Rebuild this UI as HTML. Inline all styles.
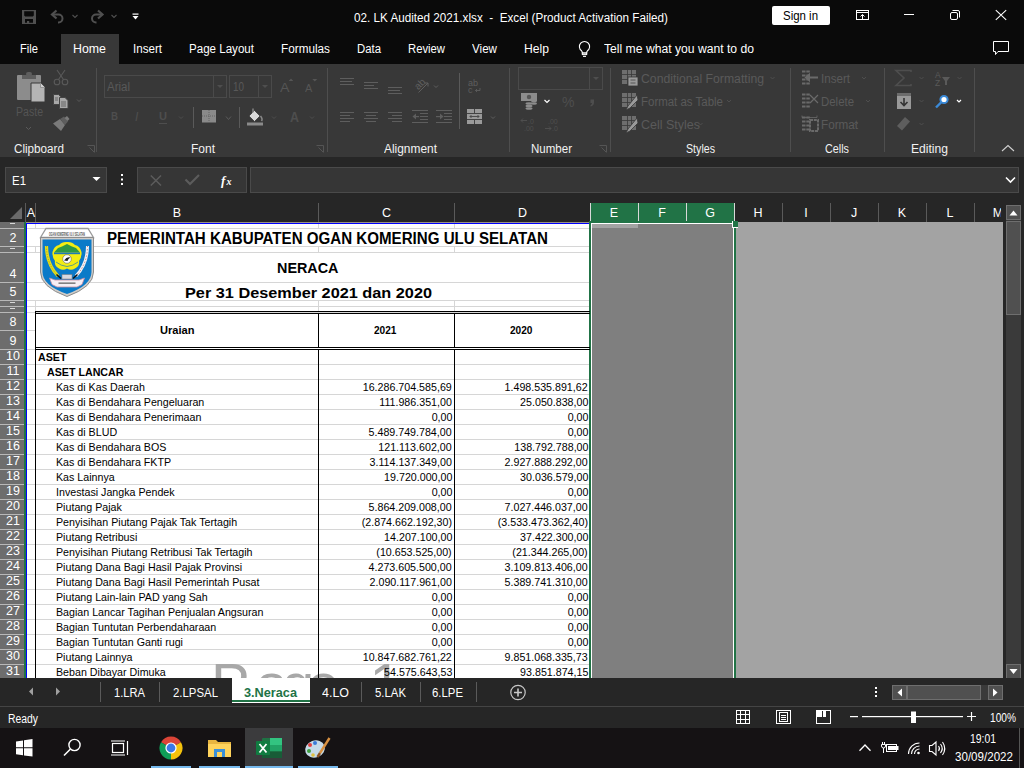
<!DOCTYPE html><html><head><meta charset="utf-8"><style>
html,body{margin:0;padding:0}
body{width:1024px;height:768px;overflow:hidden;position:relative;background:#0a0a0a;font-family:'Liberation Sans', sans-serif}
div{box-sizing:border-box}
</style></head><body>
<div style="position:absolute;left:0px;top:0px;width:1024px;height:64px;background:#0a0a0a"></div>
<div style="position:absolute;left:354px;top:12px;font-size:12.5px;line-height:12.5px;color:#fff;font-weight:normal;white-space:pre;transform:scaleX(0.9357);transform-origin:0 0">02. LK Audited 2021.xlsx  -  Excel (Product Activation Failed)</div>
<div style="position:absolute;left:772px;top:6px;width:58px;height:19px;background:#fff;border-radius:2px"></div>
<div style="position:absolute;left:783px;top:9px;font-size:13px;line-height:13px;color:#000;font-weight:normal;white-space:pre;transform:scaleX(0.8805);transform-origin:0 0">Sign in</div>
<div style="position:absolute;left:61px;top:34px;width:58px;height:30px;background:#383838"></div>
<div style="position:absolute;left:20px;top:43px;font-size:12.5px;line-height:12.5px;color:#fff;font-weight:normal;white-space:pre;transform:scaleX(0.8930);transform-origin:0 0">File</div>
<div style="position:absolute;left:73px;top:43px;font-size:12.5px;line-height:12.5px;color:#fff;font-weight:normal;white-space:pre;transform:scaleX(0.9897);transform-origin:0 0">Home</div>
<div style="position:absolute;left:133px;top:43px;font-size:12.5px;line-height:12.5px;color:#fff;font-weight:normal;white-space:pre;transform:scaleX(0.9275);transform-origin:0 0">Insert</div>
<div style="position:absolute;left:189px;top:43px;font-size:12.5px;line-height:12.5px;color:#fff;font-weight:normal;white-space:pre;transform:scaleX(0.9259);transform-origin:0 0">Page Layout</div>
<div style="position:absolute;left:281px;top:43px;font-size:12.5px;line-height:12.5px;color:#fff;font-weight:normal;white-space:pre;transform:scaleX(0.9406);transform-origin:0 0">Formulas</div>
<div style="position:absolute;left:357px;top:43px;font-size:12.5px;line-height:12.5px;color:#fff;font-weight:normal;white-space:pre;transform:scaleX(0.9089);transform-origin:0 0">Data</div>
<div style="position:absolute;left:408px;top:43px;font-size:12.5px;line-height:12.5px;color:#fff;font-weight:normal;white-space:pre;transform:scaleX(0.9024);transform-origin:0 0">Review</div>
<div style="position:absolute;left:472px;top:43px;font-size:12.5px;line-height:12.5px;color:#fff;font-weight:normal;white-space:pre;transform:scaleX(0.9302);transform-origin:0 0">View</div>
<div style="position:absolute;left:524px;top:43px;font-size:12.5px;line-height:12.5px;color:#fff;font-weight:normal;white-space:pre;transform:scaleX(0.9721);transform-origin:0 0">Help</div>
<div style="position:absolute;left:604px;top:43px;font-size:12.5px;line-height:12.5px;color:#fff;font-weight:normal;white-space:pre;transform:scaleX(0.9724);transform-origin:0 0">Tell me what you want to do</div>
<div style="position:absolute;left:0px;top:64px;width:1024px;height:93px;background:#383838"></div>
<div style="position:absolute;left:14px;top:143px;font-size:12.5px;line-height:12.5px;color:#f2f2f2;font-weight:normal;white-space:pre;transform:scaleX(0.9343);transform-origin:0 0">Clipboard</div>
<div style="position:absolute;left:191px;top:143px;font-size:12.5px;line-height:12.5px;color:#f2f2f2;font-weight:normal;white-space:pre;transform:scaleX(0.9594);transform-origin:0 0">Font</div>
<div style="position:absolute;left:384px;top:143px;font-size:12.5px;line-height:12.5px;color:#f2f2f2;font-weight:normal;white-space:pre;transform:scaleX(0.9533);transform-origin:0 0">Alignment</div>
<div style="position:absolute;left:531px;top:143px;font-size:12.5px;line-height:12.5px;color:#f2f2f2;font-weight:normal;white-space:pre;transform:scaleX(0.9220);transform-origin:0 0">Number</div>
<div style="position:absolute;left:686px;top:143px;font-size:12.5px;line-height:12.5px;color:#f2f2f2;font-weight:normal;white-space:pre;transform:scaleX(0.8518);transform-origin:0 0">Styles</div>
<div style="position:absolute;left:825px;top:143px;font-size:12.5px;line-height:12.5px;color:#f2f2f2;font-weight:normal;white-space:pre;transform:scaleX(0.8634);transform-origin:0 0">Cells</div>
<div style="position:absolute;left:911px;top:143px;font-size:12.5px;line-height:12.5px;color:#f2f2f2;font-weight:normal;white-space:pre;transform:scaleX(0.9677);transform-origin:0 0">Editing</div>
<div style="position:absolute;left:96px;top:68px;width:1px;height:84px;background:#4e4e4e"></div>
<div style="position:absolute;left:327px;top:68px;width:1px;height:84px;background:#4e4e4e"></div>
<div style="position:absolute;left:509px;top:68px;width:1px;height:84px;background:#4e4e4e"></div>
<div style="position:absolute;left:610px;top:68px;width:1px;height:84px;background:#4e4e4e"></div>
<div style="position:absolute;left:790px;top:68px;width:1px;height:84px;background:#4e4e4e"></div>
<div style="position:absolute;left:884px;top:68px;width:1px;height:84px;background:#4e4e4e"></div>
<div style="position:absolute;left:974px;top:68px;width:1px;height:84px;background:#4e4e4e"></div>
<div style="position:absolute;left:16px;top:106px;font-size:12.5px;line-height:12.5px;color:#545454;font-weight:normal;white-space:pre;transform:scaleX(0.8446);transform-origin:0 0">Paste</div>
<div style="position:absolute;left:107px;top:81px;font-size:12.5px;line-height:12.5px;color:#595959;font-weight:normal;white-space:pre;transform:scaleX(0.9194);transform-origin:0 0">Arial</div>
<div style="position:absolute;left:233px;top:81px;font-size:12.5px;line-height:12.5px;color:#595959;font-weight:normal;white-space:pre;transform:scaleX(0.7910);transform-origin:0 0">10</div>
<div style="position:absolute;left:280px;top:81px;font-size:13px;line-height:13px;color:#555;font-weight:normal;white-space:pre;transform:scaleX(1.0955);transform-origin:0 0">A</div>
<div style="position:absolute;left:305px;top:84px;font-size:10px;line-height:10px;color:#555;font-weight:normal;white-space:pre;transform:scaleX(1.0941);transform-origin:0 0">A</div>
<div style="position:absolute;left:111px;top:111px;font-size:11px;line-height:11px;color:#4e4e4e;font-weight:bold;white-space:pre;transform:scaleX(0.8802);transform-origin:0 0">B</div>
<div style="position:absolute;left:135px;top:111px;font-size:12px;line-height:12px;color:#4e4e4e;font-style:italic">I</div>
<div style="position:absolute;left:159px;top:111px;font-size:11px;line-height:11px;color:#4e4e4e;font-weight:bold;white-space:pre;transform:scaleX(1.0059);transform-origin:0 0">U</div>
<div style="position:absolute;left:159px;top:123px;width:8px;height:1px;background:#4e4e4e"></div>
<div style="position:absolute;left:290px;top:110px;font-size:14px;line-height:14px;color:#4e4e4e;font-weight:bold;white-space:pre;transform:scaleX(0.8889);transform-origin:0 0">A</div>
<div style="position:absolute;left:641px;top:73px;font-size:12.5px;line-height:12.5px;color:#5a5a5a;font-weight:normal;white-space:pre;transform:scaleX(0.9780);transform-origin:0 0">Conditional Formatting</div>
<div style="position:absolute;left:641px;top:96px;font-size:12.5px;line-height:12.5px;color:#5a5a5a;font-weight:normal;white-space:pre;transform:scaleX(0.9172);transform-origin:0 0">Format as Table</div>
<div style="position:absolute;left:641px;top:119px;font-size:12.5px;line-height:12.5px;color:#5a5a5a;font-weight:normal;white-space:pre;transform:scaleX(0.9992);transform-origin:0 0">Cell Styles</div>
<div style="position:absolute;left:821px;top:73px;font-size:12.5px;line-height:12.5px;color:#5a5a5a;font-weight:normal;white-space:pre;transform:scaleX(0.9275);transform-origin:0 0">Insert</div>
<div style="position:absolute;left:821px;top:96px;font-size:12.5px;line-height:12.5px;color:#5a5a5a;font-weight:normal;white-space:pre;transform:scaleX(0.9131);transform-origin:0 0">Delete</div>
<div style="position:absolute;left:821px;top:119px;font-size:12.5px;line-height:12.5px;color:#5a5a5a;font-weight:normal;white-space:pre;transform:scaleX(0.9345);transform-origin:0 0">Format</div>
<div style="position:absolute;left:0px;top:157px;width:1024px;height:46px;background:#262626"></div>
<div style="position:absolute;left:5px;top:167px;width:102px;height:26px;background:#363636;border:1px solid #4a4a4a"></div>
<div style="position:absolute;left:12px;top:175px;font-size:12.5px;line-height:12.5px;color:#fff;font-weight:normal;white-space:pre;transform:scaleX(0.9152);transform-origin:0 0">E1</div>
<div style="position:absolute;left:137px;top:167px;width:110px;height:26px;background:#363636;border:1px solid #4a4a4a"></div>
<div style="position:absolute;left:250px;top:167px;width:769px;height:26px;background:#363636;border:1px solid #4a4a4a"></div>
<div style="position:absolute;left:0px;top:203px;width:1024px;height:475px;background:#262626"></div>
<div style="position:absolute;left:590px;top:203px;width:145px;height:19px;background:#217346"></div>
<div style="position:absolute;left:25px;top:203px;width:1px;height:19px;background:#5a5a5a"></div>
<div style="position:absolute;left:35px;top:203px;width:1px;height:19px;background:#5a5a5a"></div>
<div style="position:absolute;left:318px;top:203px;width:1px;height:19px;background:#5a5a5a"></div>
<div style="position:absolute;left:454px;top:203px;width:1px;height:19px;background:#5a5a5a"></div>
<div style="position:absolute;left:782px;top:203px;width:1px;height:19px;background:#5a5a5a"></div>
<div style="position:absolute;left:830px;top:203px;width:1px;height:19px;background:#5a5a5a"></div>
<div style="position:absolute;left:878px;top:203px;width:1px;height:19px;background:#5a5a5a"></div>
<div style="position:absolute;left:926px;top:203px;width:1px;height:19px;background:#5a5a5a"></div>
<div style="position:absolute;left:974px;top:203px;width:1px;height:19px;background:#5a5a5a"></div>
<div style="position:absolute;left:590px;top:203px;width:1px;height:19px;background:#d8d8d8"></div>
<div style="position:absolute;left:638px;top:203px;width:1px;height:19px;background:#d8d8d8"></div>
<div style="position:absolute;left:686px;top:203px;width:1px;height:19px;background:#d8d8d8"></div>
<div style="position:absolute;left:734px;top:203px;width:1px;height:19px;background:#d8d8d8"></div>
<div style="position:absolute;left:0;top:203px;width:1001px;height:19px;overflow:hidden">
<div style="position:absolute;left:26px;top:4px;width:10px;text-align:center;font-size:12.5px;line-height:13px;color:#fff">A</div>
<div style="position:absolute;left:36px;top:4px;width:282px;text-align:center;font-size:12.5px;line-height:13px;color:#fff">B</div>
<div style="position:absolute;left:319px;top:4px;width:135px;text-align:center;font-size:12.5px;line-height:13px;color:#fff">C</div>
<div style="position:absolute;left:455px;top:4px;width:135px;text-align:center;font-size:12.5px;line-height:13px;color:#fff">D</div>
<div style="position:absolute;left:590px;top:4px;width:48px;text-align:center;font-size:12.5px;line-height:13px;color:#fff">E</div>
<div style="position:absolute;left:638px;top:4px;width:48px;text-align:center;font-size:12.5px;line-height:13px;color:#fff">F</div>
<div style="position:absolute;left:686px;top:4px;width:48px;text-align:center;font-size:12.5px;line-height:13px;color:#fff">G</div>
<div style="position:absolute;left:734px;top:4px;width:48px;text-align:center;font-size:12.5px;line-height:13px;color:#fff">H</div>
<div style="position:absolute;left:782px;top:4px;width:48px;text-align:center;font-size:12.5px;line-height:13px;color:#fff">I</div>
<div style="position:absolute;left:830px;top:4px;width:48px;text-align:center;font-size:12.5px;line-height:13px;color:#fff">J</div>
<div style="position:absolute;left:878px;top:4px;width:48px;text-align:center;font-size:12.5px;line-height:13px;color:#fff">K</div>
<div style="position:absolute;left:926px;top:4px;width:48px;text-align:center;font-size:12.5px;line-height:13px;color:#fff">L</div>
<div style="position:absolute;left:974px;top:4px;width:48px;text-align:center;font-size:12.5px;line-height:13px;color:#fff">M</div>
</div>
<div style="position:absolute;left:0px;top:222px;width:590px;height:1px;background:#9a9486"></div>
<div style="position:absolute;left:0px;top:222px;width:24px;height:456px;background:#6d6d6d"></div>
<div style="position:absolute;left:24px;top:222px;width:2px;height:456px;background:#217346"></div>
<div style="position:absolute;left:26px;top:223px;width:564px;height:455px;background:#fff"></div>
<div style="position:absolute;left:26px;top:223px;width:1px;height:455px;background:#0000ff"></div>
<div style="position:absolute;left:26px;top:223px;width:564px;height:1px;background:#0000ff"></div>
<div style="position:absolute;left:0px;top:228px;width:24px;height:1px;background:#b8b8b8"></div>
<div style="position:absolute;left:10px;top:223px;width:5px;height:1px;background:#d8d8d8"></div>
<div style="position:absolute;left:0px;top:246px;width:24px;height:1px;background:#b8b8b8"></div>
<div style="position:absolute;left:1px;top:232px;width:24px;text-align:center;font-size:12.5px;line-height:13px;color:#fff">2</div>
<div style="position:absolute;left:0px;top:252px;width:24px;height:1px;background:#b8b8b8"></div>
<div style="position:absolute;left:10px;top:248px;width:5px;height:1px;background:#d8d8d8"></div>
<div style="position:absolute;left:0px;top:282px;width:24px;height:1px;background:#b8b8b8"></div>
<div style="position:absolute;left:1px;top:268px;width:24px;text-align:center;font-size:12.5px;line-height:13px;color:#fff">4</div>
<div style="position:absolute;left:0px;top:300px;width:24px;height:1px;background:#b8b8b8"></div>
<div style="position:absolute;left:1px;top:286px;width:24px;text-align:center;font-size:12.5px;line-height:13px;color:#fff">5</div>
<div style="position:absolute;left:0px;top:306px;width:24px;height:1px;background:#b8b8b8"></div>
<div style="position:absolute;left:10px;top:302px;width:5px;height:1px;background:#d8d8d8"></div>
<div style="position:absolute;left:0px;top:312px;width:24px;height:1px;background:#b8b8b8"></div>
<div style="position:absolute;left:10px;top:308px;width:5px;height:1px;background:#d8d8d8"></div>
<div style="position:absolute;left:0px;top:330px;width:24px;height:1px;background:#b8b8b8"></div>
<div style="position:absolute;left:1px;top:316px;width:24px;text-align:center;font-size:12.5px;line-height:13px;color:#fff">8</div>
<div style="position:absolute;left:0px;top:349px;width:24px;height:1px;background:#b8b8b8"></div>
<div style="position:absolute;left:1px;top:335px;width:24px;text-align:center;font-size:12.5px;line-height:13px;color:#fff">9</div>
<div style="position:absolute;left:0px;top:364px;width:24px;height:1px;background:#b8b8b8"></div>
<div style="position:absolute;left:1px;top:350px;width:24px;text-align:center;font-size:12.5px;line-height:13px;color:#fff">10</div>
<div style="position:absolute;left:0px;top:379px;width:24px;height:1px;background:#b8b8b8"></div>
<div style="position:absolute;left:1px;top:365px;width:24px;text-align:center;font-size:12.5px;line-height:13px;color:#fff">11</div>
<div style="position:absolute;left:0px;top:394px;width:24px;height:1px;background:#b8b8b8"></div>
<div style="position:absolute;left:1px;top:380px;width:24px;text-align:center;font-size:12.5px;line-height:13px;color:#fff">12</div>
<div style="position:absolute;left:0px;top:409px;width:24px;height:1px;background:#b8b8b8"></div>
<div style="position:absolute;left:1px;top:395px;width:24px;text-align:center;font-size:12.5px;line-height:13px;color:#fff">13</div>
<div style="position:absolute;left:0px;top:424px;width:24px;height:1px;background:#b8b8b8"></div>
<div style="position:absolute;left:1px;top:410px;width:24px;text-align:center;font-size:12.5px;line-height:13px;color:#fff">14</div>
<div style="position:absolute;left:0px;top:439px;width:24px;height:1px;background:#b8b8b8"></div>
<div style="position:absolute;left:1px;top:425px;width:24px;text-align:center;font-size:12.5px;line-height:13px;color:#fff">15</div>
<div style="position:absolute;left:0px;top:454px;width:24px;height:1px;background:#b8b8b8"></div>
<div style="position:absolute;left:1px;top:440px;width:24px;text-align:center;font-size:12.5px;line-height:13px;color:#fff">16</div>
<div style="position:absolute;left:0px;top:469px;width:24px;height:1px;background:#b8b8b8"></div>
<div style="position:absolute;left:1px;top:455px;width:24px;text-align:center;font-size:12.5px;line-height:13px;color:#fff">17</div>
<div style="position:absolute;left:0px;top:484px;width:24px;height:1px;background:#b8b8b8"></div>
<div style="position:absolute;left:1px;top:470px;width:24px;text-align:center;font-size:12.5px;line-height:13px;color:#fff">18</div>
<div style="position:absolute;left:0px;top:499px;width:24px;height:1px;background:#b8b8b8"></div>
<div style="position:absolute;left:1px;top:485px;width:24px;text-align:center;font-size:12.5px;line-height:13px;color:#fff">19</div>
<div style="position:absolute;left:0px;top:514px;width:24px;height:1px;background:#b8b8b8"></div>
<div style="position:absolute;left:1px;top:500px;width:24px;text-align:center;font-size:12.5px;line-height:13px;color:#fff">20</div>
<div style="position:absolute;left:0px;top:529px;width:24px;height:1px;background:#b8b8b8"></div>
<div style="position:absolute;left:1px;top:515px;width:24px;text-align:center;font-size:12.5px;line-height:13px;color:#fff">21</div>
<div style="position:absolute;left:0px;top:544px;width:24px;height:1px;background:#b8b8b8"></div>
<div style="position:absolute;left:1px;top:530px;width:24px;text-align:center;font-size:12.5px;line-height:13px;color:#fff">22</div>
<div style="position:absolute;left:0px;top:559px;width:24px;height:1px;background:#b8b8b8"></div>
<div style="position:absolute;left:1px;top:545px;width:24px;text-align:center;font-size:12.5px;line-height:13px;color:#fff">23</div>
<div style="position:absolute;left:0px;top:574px;width:24px;height:1px;background:#b8b8b8"></div>
<div style="position:absolute;left:1px;top:560px;width:24px;text-align:center;font-size:12.5px;line-height:13px;color:#fff">24</div>
<div style="position:absolute;left:0px;top:589px;width:24px;height:1px;background:#b8b8b8"></div>
<div style="position:absolute;left:1px;top:575px;width:24px;text-align:center;font-size:12.5px;line-height:13px;color:#fff">25</div>
<div style="position:absolute;left:0px;top:604px;width:24px;height:1px;background:#b8b8b8"></div>
<div style="position:absolute;left:1px;top:590px;width:24px;text-align:center;font-size:12.5px;line-height:13px;color:#fff">26</div>
<div style="position:absolute;left:0px;top:619px;width:24px;height:1px;background:#b8b8b8"></div>
<div style="position:absolute;left:1px;top:605px;width:24px;text-align:center;font-size:12.5px;line-height:13px;color:#fff">27</div>
<div style="position:absolute;left:0px;top:634px;width:24px;height:1px;background:#b8b8b8"></div>
<div style="position:absolute;left:1px;top:620px;width:24px;text-align:center;font-size:12.5px;line-height:13px;color:#fff">28</div>
<div style="position:absolute;left:0px;top:649px;width:24px;height:1px;background:#b8b8b8"></div>
<div style="position:absolute;left:1px;top:635px;width:24px;text-align:center;font-size:12.5px;line-height:13px;color:#fff">29</div>
<div style="position:absolute;left:0px;top:664px;width:24px;height:1px;background:#b8b8b8"></div>
<div style="position:absolute;left:1px;top:650px;width:24px;text-align:center;font-size:12.5px;line-height:13px;color:#fff">30</div>
<div style="position:absolute;left:0px;top:679px;width:24px;height:1px;background:#b8b8b8"></div>
<div style="position:absolute;left:1px;top:665px;width:24px;text-align:center;font-size:12.5px;line-height:13px;color:#fff">31</div>
<div style="position:absolute;left:27px;top:228px;width:563px;height:1px;background:#d6d6d6"></div>
<div style="position:absolute;left:27px;top:246px;width:563px;height:1px;background:#d6d6d6"></div>
<div style="position:absolute;left:27px;top:252px;width:563px;height:1px;background:#d6d6d6"></div>
<div style="position:absolute;left:27px;top:282px;width:563px;height:1px;background:#d6d6d6"></div>
<div style="position:absolute;left:27px;top:300px;width:563px;height:1px;background:#d6d6d6"></div>
<div style="position:absolute;left:27px;top:306px;width:563px;height:1px;background:#d6d6d6"></div>
<div style="position:absolute;left:27px;top:312px;width:563px;height:1px;background:#d6d6d6"></div>
<div style="position:absolute;left:27px;top:330px;width:563px;height:1px;background:#d6d6d6"></div>
<div style="position:absolute;left:27px;top:349px;width:563px;height:1px;background:#d6d6d6"></div>
<div style="position:absolute;left:27px;top:364px;width:563px;height:1px;background:#d6d6d6"></div>
<div style="position:absolute;left:27px;top:379px;width:563px;height:1px;background:#d6d6d6"></div>
<div style="position:absolute;left:27px;top:394px;width:563px;height:1px;background:#d6d6d6"></div>
<div style="position:absolute;left:27px;top:409px;width:563px;height:1px;background:#d6d6d6"></div>
<div style="position:absolute;left:27px;top:424px;width:563px;height:1px;background:#d6d6d6"></div>
<div style="position:absolute;left:27px;top:439px;width:563px;height:1px;background:#d6d6d6"></div>
<div style="position:absolute;left:27px;top:454px;width:563px;height:1px;background:#d6d6d6"></div>
<div style="position:absolute;left:27px;top:469px;width:563px;height:1px;background:#d6d6d6"></div>
<div style="position:absolute;left:27px;top:484px;width:563px;height:1px;background:#d6d6d6"></div>
<div style="position:absolute;left:27px;top:499px;width:563px;height:1px;background:#d6d6d6"></div>
<div style="position:absolute;left:27px;top:514px;width:563px;height:1px;background:#d6d6d6"></div>
<div style="position:absolute;left:27px;top:529px;width:563px;height:1px;background:#d6d6d6"></div>
<div style="position:absolute;left:27px;top:544px;width:563px;height:1px;background:#d6d6d6"></div>
<div style="position:absolute;left:27px;top:559px;width:563px;height:1px;background:#d6d6d6"></div>
<div style="position:absolute;left:27px;top:574px;width:563px;height:1px;background:#d6d6d6"></div>
<div style="position:absolute;left:27px;top:589px;width:563px;height:1px;background:#d6d6d6"></div>
<div style="position:absolute;left:27px;top:604px;width:563px;height:1px;background:#d6d6d6"></div>
<div style="position:absolute;left:27px;top:619px;width:563px;height:1px;background:#d6d6d6"></div>
<div style="position:absolute;left:27px;top:634px;width:563px;height:1px;background:#d6d6d6"></div>
<div style="position:absolute;left:27px;top:649px;width:563px;height:1px;background:#d6d6d6"></div>
<div style="position:absolute;left:27px;top:664px;width:563px;height:1px;background:#d6d6d6"></div>
<div style="position:absolute;left:27px;top:679px;width:563px;height:1px;background:#d6d6d6"></div>
<div style="position:absolute;left:35px;top:224px;width:1px;height:454px;background:#d6d6d6"></div>
<div style="position:absolute;left:318px;top:224px;width:1px;height:88px;background:#d6d6d6"></div>
<div style="position:absolute;left:454px;top:224px;width:1px;height:88px;background:#d6d6d6"></div>
<div style="position:absolute;left:27px;top:229px;width:563px;height:17px;background:#fff"></div>
<div style="position:absolute;left:27px;top:253px;width:563px;height:29px;background:#fff"></div>
<div style="position:absolute;left:27px;top:283px;width:563px;height:17px;background:#fff"></div>
<div style="position:absolute;left:36px;top:314px;width:554px;height:33px;background:#fff"></div>
<div style="position:absolute;left:589px;top:221px;width:147px;height:457px;background:#217346"></div>
<div style="position:absolute;left:591px;top:223px;width:143px;height:455px;background:#fff"></div>
<div style="position:absolute;left:592px;top:224px;width:141px;height:454px;background:#7f7f7f"></div>
<div style="position:absolute;left:592px;top:224px;width:46px;height:4px;background:#a3a3a3"></div>
<div style="position:absolute;left:736px;top:222px;width:267px;height:456px;background:#a3a3a3"></div>
<div style="position:absolute;left:732px;top:221px;width:6px;height:7px;background:#217346;border-left:1px solid #fff;border-bottom:1px solid #fff"></div>
<div style="position:absolute;left:27px;top:224px;width:562px;height:454px;overflow:hidden"><div style="position:absolute;left:184.0px;top:431px;font-size:58px;line-height:58px;color:#a8a8a8;white-space:pre">P</div><div style="position:absolute;left:228.7px;top:431px;font-size:58px;line-height:58px;color:#a8a8a8;white-space:pre">a</div><div style="position:absolute;left:255.0px;top:431px;font-size:58px;line-height:58px;color:#a8a8a8;white-space:pre">g</div><div style="position:absolute;left:280.2px;top:431px;font-size:58px;line-height:58px;color:#a8a8a8;white-space:pre">e</div><div style="position:absolute;left:342.6px;top:431px;font-size:58px;line-height:58px;color:#a8a8a8;white-space:pre">1</div></div>
<div style="position:absolute;left:35px;top:311px;width:555px;height:1px;background:#000"></div>
<div style="position:absolute;left:35px;top:313px;width:555px;height:1px;background:#000"></div>
<div style="position:absolute;left:35px;top:347px;width:555px;height:1px;background:#000"></div>
<div style="position:absolute;left:35px;top:349px;width:555px;height:1px;background:#000"></div>
<div style="position:absolute;left:35px;top:311px;width:1px;height:367px;background:#000"></div>
<div style="position:absolute;left:318px;top:313px;width:1px;height:35px;background:#000"></div>
<div style="position:absolute;left:318px;top:349px;width:1px;height:329px;background:#000"></div>
<div style="position:absolute;left:454px;top:313px;width:1px;height:35px;background:#000"></div>
<div style="position:absolute;left:454px;top:349px;width:1px;height:329px;background:#000"></div>
<div style="position:absolute;left:107px;top:230.6px;font-size:16px;line-height:16px;color:#000;font-weight:bold;white-space:pre;transform:scaleX(0.9444);transform-origin:0 0">PEMERINTAH KABUPATEN OGAN KOMERING ULU SELATAN</div>
<div style="position:absolute;left:277px;top:260px;font-size:15.5px;line-height:15.5px;color:#000;font-weight:bold;white-space:pre;transform:scaleX(0.9274);transform-origin:0 0">NERACA</div>
<div style="position:absolute;left:184.5px;top:285px;font-size:15.5px;line-height:15.5px;color:#000;font-weight:bold;white-space:pre;transform:scaleX(1.0499);transform-origin:0 0">Per 31 Desember 2021 dan 2020</div>
<div style="position:absolute;left:160px;top:325px;font-size:11px;line-height:11px;color:#000;font-weight:bold;white-space:pre;transform:scaleX(1.0073);transform-origin:0 0">Uraian</div>
<div style="position:absolute;left:374px;top:325px;font-size:11px;line-height:11px;color:#000;font-weight:bold;white-space:pre;transform:scaleX(0.9190);transform-origin:0 0">2021</div>
<div style="position:absolute;left:510px;top:325px;font-size:11px;line-height:11px;color:#000;font-weight:bold;white-space:pre;transform:scaleX(0.9190);transform-origin:0 0">2020</div>
<div style="position:absolute;left:38px;top:350.5px;font-size:11px;line-height:12px;color:#000;font-weight:bold;white-space:pre;transform:scaleX(0.97);transform-origin:0 0">ASET</div>
<div style="position:absolute;left:47px;top:365.5px;font-size:11px;line-height:12px;color:#000;font-weight:bold;white-space:pre;transform:scaleX(0.97);transform-origin:0 0">ASET LANCAR</div>
<div style="position:absolute;left:56px;top:380.5px;font-size:11px;line-height:12px;color:#000;font-weight:normal;white-space:pre;transform:scaleX(0.97);transform-origin:0 0">Kas di Kas Daerah</div>
<div style="position:absolute;right:572px;top:380.5px;font-size:11px;line-height:12px;color:#000;white-space:pre;transform:scaleX(0.97);transform-origin:100% 0">16.286.704.585,69</div>
<div style="position:absolute;right:436px;top:380.5px;font-size:11px;line-height:12px;color:#000;white-space:pre;transform:scaleX(0.97);transform-origin:100% 0">1.498.535.891,62</div>
<div style="position:absolute;left:56px;top:395.5px;font-size:11px;line-height:12px;color:#000;font-weight:normal;white-space:pre;transform:scaleX(0.97);transform-origin:0 0">Kas di Bendahara Pengeluaran</div>
<div style="position:absolute;right:572px;top:395.5px;font-size:11px;line-height:12px;color:#000;white-space:pre;transform:scaleX(0.97);transform-origin:100% 0">111.986.351,00</div>
<div style="position:absolute;right:436px;top:395.5px;font-size:11px;line-height:12px;color:#000;white-space:pre;transform:scaleX(0.97);transform-origin:100% 0">25.050.838,00</div>
<div style="position:absolute;left:56px;top:410.5px;font-size:11px;line-height:12px;color:#000;font-weight:normal;white-space:pre;transform:scaleX(0.97);transform-origin:0 0">Kas di Bendahara Penerimaan</div>
<div style="position:absolute;right:572px;top:410.5px;font-size:11px;line-height:12px;color:#000;white-space:pre;transform:scaleX(0.97);transform-origin:100% 0">0,00</div>
<div style="position:absolute;right:436px;top:410.5px;font-size:11px;line-height:12px;color:#000;white-space:pre;transform:scaleX(0.97);transform-origin:100% 0">0,00</div>
<div style="position:absolute;left:56px;top:425.5px;font-size:11px;line-height:12px;color:#000;font-weight:normal;white-space:pre;transform:scaleX(0.97);transform-origin:0 0">Kas di BLUD</div>
<div style="position:absolute;right:572px;top:425.5px;font-size:11px;line-height:12px;color:#000;white-space:pre;transform:scaleX(0.97);transform-origin:100% 0">5.489.749.784,00</div>
<div style="position:absolute;right:436px;top:425.5px;font-size:11px;line-height:12px;color:#000;white-space:pre;transform:scaleX(0.97);transform-origin:100% 0">0,00</div>
<div style="position:absolute;left:56px;top:440.5px;font-size:11px;line-height:12px;color:#000;font-weight:normal;white-space:pre;transform:scaleX(0.97);transform-origin:0 0">Kas di Bendahara BOS</div>
<div style="position:absolute;right:572px;top:440.5px;font-size:11px;line-height:12px;color:#000;white-space:pre;transform:scaleX(0.97);transform-origin:100% 0">121.113.602,00</div>
<div style="position:absolute;right:436px;top:440.5px;font-size:11px;line-height:12px;color:#000;white-space:pre;transform:scaleX(0.97);transform-origin:100% 0">138.792.788,00</div>
<div style="position:absolute;left:56px;top:455.5px;font-size:11px;line-height:12px;color:#000;font-weight:normal;white-space:pre;transform:scaleX(0.97);transform-origin:0 0">Kas di Bendahara FKTP</div>
<div style="position:absolute;right:572px;top:455.5px;font-size:11px;line-height:12px;color:#000;white-space:pre;transform:scaleX(0.97);transform-origin:100% 0">3.114.137.349,00</div>
<div style="position:absolute;right:436px;top:455.5px;font-size:11px;line-height:12px;color:#000;white-space:pre;transform:scaleX(0.97);transform-origin:100% 0">2.927.888.292,00</div>
<div style="position:absolute;left:56px;top:470.5px;font-size:11px;line-height:12px;color:#000;font-weight:normal;white-space:pre;transform:scaleX(0.97);transform-origin:0 0">Kas Lainnya</div>
<div style="position:absolute;right:572px;top:470.5px;font-size:11px;line-height:12px;color:#000;white-space:pre;transform:scaleX(0.97);transform-origin:100% 0">19.720.000,00</div>
<div style="position:absolute;right:436px;top:470.5px;font-size:11px;line-height:12px;color:#000;white-space:pre;transform:scaleX(0.97);transform-origin:100% 0">30.036.579,00</div>
<div style="position:absolute;left:56px;top:485.5px;font-size:11px;line-height:12px;color:#000;font-weight:normal;white-space:pre;transform:scaleX(0.97);transform-origin:0 0">Investasi Jangka Pendek</div>
<div style="position:absolute;right:572px;top:485.5px;font-size:11px;line-height:12px;color:#000;white-space:pre;transform:scaleX(0.97);transform-origin:100% 0">0,00</div>
<div style="position:absolute;right:436px;top:485.5px;font-size:11px;line-height:12px;color:#000;white-space:pre;transform:scaleX(0.97);transform-origin:100% 0">0,00</div>
<div style="position:absolute;left:56px;top:500.5px;font-size:11px;line-height:12px;color:#000;font-weight:normal;white-space:pre;transform:scaleX(0.97);transform-origin:0 0">Piutang Pajak</div>
<div style="position:absolute;right:572px;top:500.5px;font-size:11px;line-height:12px;color:#000;white-space:pre;transform:scaleX(0.97);transform-origin:100% 0">5.864.209.008,00</div>
<div style="position:absolute;right:436px;top:500.5px;font-size:11px;line-height:12px;color:#000;white-space:pre;transform:scaleX(0.97);transform-origin:100% 0">7.027.446.037,00</div>
<div style="position:absolute;left:56px;top:515.5px;font-size:11px;line-height:12px;color:#000;font-weight:normal;white-space:pre;transform:scaleX(0.97);transform-origin:0 0">Penyisihan Piutang Pajak Tak Tertagih</div>
<div style="position:absolute;right:572px;top:515.5px;font-size:11px;line-height:12px;color:#000;white-space:pre;transform:scaleX(0.97);transform-origin:100% 0">(2.874.662.192,30)</div>
<div style="position:absolute;right:436px;top:515.5px;font-size:11px;line-height:12px;color:#000;white-space:pre;transform:scaleX(0.97);transform-origin:100% 0">(3.533.473.362,40)</div>
<div style="position:absolute;left:56px;top:530.5px;font-size:11px;line-height:12px;color:#000;font-weight:normal;white-space:pre;transform:scaleX(0.97);transform-origin:0 0">Piutang Retribusi</div>
<div style="position:absolute;right:572px;top:530.5px;font-size:11px;line-height:12px;color:#000;white-space:pre;transform:scaleX(0.97);transform-origin:100% 0">14.207.100,00</div>
<div style="position:absolute;right:436px;top:530.5px;font-size:11px;line-height:12px;color:#000;white-space:pre;transform:scaleX(0.97);transform-origin:100% 0">37.422.300,00</div>
<div style="position:absolute;left:56px;top:545.5px;font-size:11px;line-height:12px;color:#000;font-weight:normal;white-space:pre;transform:scaleX(0.97);transform-origin:0 0">Penyisihan Piutang Retribusi Tak Tertagih</div>
<div style="position:absolute;right:572px;top:545.5px;font-size:11px;line-height:12px;color:#000;white-space:pre;transform:scaleX(0.97);transform-origin:100% 0">(10.653.525,00)</div>
<div style="position:absolute;right:436px;top:545.5px;font-size:11px;line-height:12px;color:#000;white-space:pre;transform:scaleX(0.97);transform-origin:100% 0">(21.344.265,00)</div>
<div style="position:absolute;left:56px;top:560.5px;font-size:11px;line-height:12px;color:#000;font-weight:normal;white-space:pre;transform:scaleX(0.97);transform-origin:0 0">Piutang Dana Bagi Hasil Pajak Provinsi</div>
<div style="position:absolute;right:572px;top:560.5px;font-size:11px;line-height:12px;color:#000;white-space:pre;transform:scaleX(0.97);transform-origin:100% 0">4.273.605.500,00</div>
<div style="position:absolute;right:436px;top:560.5px;font-size:11px;line-height:12px;color:#000;white-space:pre;transform:scaleX(0.97);transform-origin:100% 0">3.109.813.406,00</div>
<div style="position:absolute;left:56px;top:575.5px;font-size:11px;line-height:12px;color:#000;font-weight:normal;white-space:pre;transform:scaleX(0.97);transform-origin:0 0">Piutang Dana Bagi Hasil Pemerintah Pusat</div>
<div style="position:absolute;right:572px;top:575.5px;font-size:11px;line-height:12px;color:#000;white-space:pre;transform:scaleX(0.97);transform-origin:100% 0">2.090.117.961,00</div>
<div style="position:absolute;right:436px;top:575.5px;font-size:11px;line-height:12px;color:#000;white-space:pre;transform:scaleX(0.97);transform-origin:100% 0">5.389.741.310,00</div>
<div style="position:absolute;left:56px;top:590.5px;font-size:11px;line-height:12px;color:#000;font-weight:normal;white-space:pre;transform:scaleX(0.97);transform-origin:0 0">Piutang Lain-lain PAD yang Sah</div>
<div style="position:absolute;right:572px;top:590.5px;font-size:11px;line-height:12px;color:#000;white-space:pre;transform:scaleX(0.97);transform-origin:100% 0">0,00</div>
<div style="position:absolute;right:436px;top:590.5px;font-size:11px;line-height:12px;color:#000;white-space:pre;transform:scaleX(0.97);transform-origin:100% 0">0,00</div>
<div style="position:absolute;left:56px;top:605.5px;font-size:11px;line-height:12px;color:#000;font-weight:normal;white-space:pre;transform:scaleX(0.97);transform-origin:0 0">Bagian Lancar Tagihan Penjualan Angsuran</div>
<div style="position:absolute;right:572px;top:605.5px;font-size:11px;line-height:12px;color:#000;white-space:pre;transform:scaleX(0.97);transform-origin:100% 0">0,00</div>
<div style="position:absolute;right:436px;top:605.5px;font-size:11px;line-height:12px;color:#000;white-space:pre;transform:scaleX(0.97);transform-origin:100% 0">0,00</div>
<div style="position:absolute;left:56px;top:620.5px;font-size:11px;line-height:12px;color:#000;font-weight:normal;white-space:pre;transform:scaleX(0.97);transform-origin:0 0">Bagian Tuntutan Perbendaharaan</div>
<div style="position:absolute;right:572px;top:620.5px;font-size:11px;line-height:12px;color:#000;white-space:pre;transform:scaleX(0.97);transform-origin:100% 0">0,00</div>
<div style="position:absolute;right:436px;top:620.5px;font-size:11px;line-height:12px;color:#000;white-space:pre;transform:scaleX(0.97);transform-origin:100% 0">0,00</div>
<div style="position:absolute;left:56px;top:635.5px;font-size:11px;line-height:12px;color:#000;font-weight:normal;white-space:pre;transform:scaleX(0.97);transform-origin:0 0">Bagian Tuntutan Ganti rugi</div>
<div style="position:absolute;right:572px;top:635.5px;font-size:11px;line-height:12px;color:#000;white-space:pre;transform:scaleX(0.97);transform-origin:100% 0">0,00</div>
<div style="position:absolute;right:436px;top:635.5px;font-size:11px;line-height:12px;color:#000;white-space:pre;transform:scaleX(0.97);transform-origin:100% 0">0,00</div>
<div style="position:absolute;left:56px;top:650.5px;font-size:11px;line-height:12px;color:#000;font-weight:normal;white-space:pre;transform:scaleX(0.97);transform-origin:0 0">Piutang Lainnya</div>
<div style="position:absolute;right:572px;top:650.5px;font-size:11px;line-height:12px;color:#000;white-space:pre;transform:scaleX(0.97);transform-origin:100% 0">10.847.682.761,22</div>
<div style="position:absolute;right:436px;top:650.5px;font-size:11px;line-height:12px;color:#000;white-space:pre;transform:scaleX(0.97);transform-origin:100% 0">9.851.068.335,73</div>
<div style="position:absolute;left:56px;top:665.5px;font-size:11px;line-height:12px;color:#000;font-weight:normal;white-space:pre;transform:scaleX(0.97);transform-origin:0 0">Beban Dibayar Dimuka</div>
<div style="position:absolute;right:572px;top:665.5px;font-size:11px;line-height:12px;color:#000;white-space:pre;transform:scaleX(0.97);transform-origin:100% 0">54.575.643,53</div>
<div style="position:absolute;right:436px;top:665.5px;font-size:11px;line-height:12px;color:#000;white-space:pre;transform:scaleX(0.97);transform-origin:100% 0">93.851.874,15</div>
<div style="position:absolute;left:1003px;top:203px;width:21px;height:475px;background:#262626"></div>
<div style="position:absolute;left:1006px;top:205px;width:15px;height:473px;background:#3a3a3a"></div>
<div style="position:absolute;left:1006px;top:205px;width:15px;height:15px;background:#505050;border:1px solid #6e6e6e"></div>
<div style="position:absolute;left:1006px;top:221px;width:15px;height:94px;background:#505050;border:1px solid #6e6e6e"></div>
<div style="position:absolute;left:1006px;top:664px;width:15px;height:15px;background:#505050;border:1px solid #6e6e6e"></div>
<div style="position:absolute;left:0px;top:678px;width:1024px;height:28px;background:#262626"></div>
<div style="position:absolute;left:0px;top:706px;width:1024px;height:1px;background:#444"></div>
<div style="position:absolute;left:232px;top:678px;width:78px;height:25px;background:#fff"></div>
<div style="position:absolute;left:232px;top:700px;width:78px;height:2px;background:#217346"></div>
<div style="position:absolute;left:100px;top:682px;width:1px;height:20px;background:#5a5a5a"></div>
<div style="position:absolute;left:159px;top:682px;width:1px;height:20px;background:#5a5a5a"></div>
<div style="position:absolute;left:361px;top:682px;width:1px;height:20px;background:#5a5a5a"></div>
<div style="position:absolute;left:420px;top:682px;width:1px;height:20px;background:#5a5a5a"></div>
<div style="position:absolute;left:476px;top:682px;width:1px;height:20px;background:#5a5a5a"></div>
<div style="position:absolute;left:114px;top:687px;font-size:12.5px;line-height:12.5px;color:#fff;font-weight:normal;white-space:pre;transform:scaleX(0.8921);transform-origin:0 0">1.LRA</div>
<div style="position:absolute;left:173px;top:687px;font-size:12.5px;line-height:12.5px;color:#fff;font-weight:normal;white-space:pre;transform:scaleX(0.9120);transform-origin:0 0">2.LPSAL</div>
<div style="position:absolute;left:244px;top:687px;font-size:12.5px;line-height:12.5px;color:#217346;font-weight:bold;white-space:pre;transform:scaleX(1.0168);transform-origin:0 0">3.Neraca</div>
<div style="position:absolute;left:322px;top:687px;font-size:12.5px;line-height:12.5px;color:#fff;font-weight:normal;white-space:pre;transform:scaleX(0.9960);transform-origin:0 0">4.LO</div>
<div style="position:absolute;left:375px;top:687px;font-size:12.5px;line-height:12.5px;color:#fff;font-weight:normal;white-space:pre;transform:scaleX(0.9101);transform-origin:0 0">5.LAK</div>
<div style="position:absolute;left:432px;top:687px;font-size:12.5px;line-height:12.5px;color:#fff;font-weight:normal;white-space:pre;transform:scaleX(0.9101);transform-origin:0 0">6.LPE</div>
<div style="position:absolute;left:892px;top:685px;width:111px;height:15px;background:#3a3a3a"></div>
<div style="position:absolute;left:892px;top:685px;width:15px;height:15px;background:#505050;border:1px solid #6e6e6e"></div>
<div style="position:absolute;left:907px;top:685px;width:74px;height:15px;background:#505050;border:1px solid #6e6e6e"></div>
<div style="position:absolute;left:988px;top:685px;width:15px;height:15px;background:#505050;border:1px solid #6e6e6e"></div>
<div style="position:absolute;left:0px;top:707px;width:1024px;height:21px;background:#262626"></div>
<div style="position:absolute;left:8px;top:713px;font-size:12.5px;line-height:12.5px;color:#fff;font-weight:normal;white-space:pre;transform:scaleX(0.8301);transform-origin:0 0">Ready</div>
<div style="position:absolute;left:990px;top:712px;font-size:12.5px;line-height:12.5px;color:#fff;font-weight:normal;white-space:pre;transform:scaleX(0.8129);transform-origin:0 0">100%</div>
<div style="position:absolute;left:0px;top:728px;width:1024px;height:40px;background:#151214"></div>
<div style="position:absolute;left:245px;top:728px;width:48px;height:40px;background:#3b3b3d"></div>
<div style="position:absolute;left:151px;top:766px;width:40px;height:2px;background:#76b9ed"></div>
<div style="position:absolute;left:199px;top:766px;width:41px;height:2px;background:#76b9ed"></div>
<div style="position:absolute;left:245px;top:766px;width:48px;height:2px;background:#76b9ed"></div>
<div style="position:absolute;left:298px;top:766px;width:40px;height:2px;background:#76b9ed"></div>
<div style="position:absolute;left:970px;top:733px;font-size:12.5px;line-height:12.5px;color:#fff;font-weight:normal;white-space:pre;transform:scaleX(0.8312);transform-origin:0 0">19:01</div>
<div style="position:absolute;left:955px;top:751px;font-size:12.5px;line-height:12.5px;color:#fff;font-weight:normal;white-space:pre;transform:scaleX(0.9271);transform-origin:0 0">30/09/2022</div>
<div style="position:absolute;left:1019px;top:728px;width:1px;height:40px;background:#555"></div>
<svg style="position:absolute;left:0;top:0" width="1024" height="768">
<path d="M22 10 H36 V24 H22 Z M24.2 11.2 V15.6 L25.2 16.6 H32.8 L33.8 15.6 V11.2 Z M25 19 V22.8 H27 V21 H29.2 V22.8 H33 V19 Z" fill="#505050" fill-rule="evenodd"/>
<path d="M52.5 14.5 H58.5 A4 4 0 0 1 58.5 22.5 H58" fill="none" stroke="#505050" stroke-width="2"/>
<path d="M56.5 10.5 L52 14.5 L56.5 18.5" fill="none" stroke="#505050" stroke-width="2.2"/>
<path d="M72.5 15 L75 17.5 L77.5 15" fill="none" stroke="#505050" stroke-width="1.1"/>
<path d="M102 14.5 H96 A4 4 0 0 0 96 22.5 H96.5" fill="none" stroke="#505050" stroke-width="2"/>
<path d="M98 10.5 L102.5 14.5 L98 18.5" fill="none" stroke="#505050" stroke-width="2.2"/>
<path d="M111.5 15 L114 17.5 L116.5 15" fill="none" stroke="#505050" stroke-width="1.1"/>
<rect x="132.5" y="13.5" width="6" height="1.2" fill="#fff"/>
<path d="M132.5 16 H138.5 L135.5 19.5 Z" fill="#fff"/>
<rect x="856.5" y="10.5" width="12" height="9" fill="none" stroke="#fff" stroke-width="1"/>
<line x1="856" y1="12.5" x2="869" y2="12.5" stroke="#fff" stroke-width="1"/>
<path d="M862.5 19 V14.5 M860.5 16.5 L862.5 14.5 L864.5 16.5" fill="none" stroke="#fff" stroke-width="1"/>
<line x1="904" y1="14.5" x2="914" y2="14.5" stroke="#fff" stroke-width="1"/>
<rect x="950.5" y="12.5" width="7" height="7" rx="1.5" fill="none" stroke="#fff" stroke-width="1"/>
<path d="M952.5 10.5 H958 A1.5 1.5 0 0 1 959.5 12 V17.5" fill="none" stroke="#fff" stroke-width="1"/>
<path d="M995.8 10.2 L1006.2 19.8 M1006.2 10.2 L995.8 19.8" stroke="#fff" stroke-width="1.1"/>
<path d="M993.5 41.5 H1008.5 V51.5 H998 L995.5 54.5 V51.5 H993.5 Z" fill="none" stroke="#fff" stroke-width="1"/>
<path d="M582.3 53 V52.2 L581.57 50.78 A5.1 5.1 0 1 1 587.43 50.78 L586.7 52.2 V53 Z" fill="none" stroke="#fff" stroke-width="1.1"/>
<rect x="582.3" y="53" width="4.4" height="1.6" fill="none" stroke="#fff" stroke-width="1"/>
<rect x="583" y="55.8" width="3" height="1.1" fill="#fff"/>
<path d="M17 76 Q17 75 18 75 H40 Q41 75 41 76 V99 Q41 100 40 100 H18 Q17 100 17 99 Z" fill="#8c8c8c"/>
<rect x="22" y="75" width="14" height="4" fill="#5e5e5e"/>
<rect x="26" y="72" width="6" height="4" rx="2" fill="#5e5e5e"/>
<path d="M31 83 H41 L45 87 V102 H31 Z" fill="#b4b4b4" stroke="#383838" stroke-width="1"/>
<path d="M40.5 83 V87.5 H45" fill="#d0d0d0" stroke="#8a8a8a" stroke-width="0.8"/>
<path d="M26 127 L28.5 129.5 L31 127" fill="none" stroke="#5a5a5a" stroke-width="1"/>
<circle cx="57" cy="82" r="2.8" fill="none" stroke="#5a5a5a" stroke-width="1.1"/>
<circle cx="65" cy="82" r="2.8" fill="none" stroke="#5a5a5a" stroke-width="1.1"/>
<path d="M58.5 79.5 L65 70 M63.5 79.5 L57 70" stroke="#5a5a5a" stroke-width="1.1"/>
<path d="M53.5 94.5 H58.5 L60.5 96.5 V104.5 H53.5 Z" fill="#a8a8a8" stroke="#444" stroke-width="1"/>
<path d="M59.5 97.5 H65 L68 100.5 V108.5 H59.5 Z" fill="#a8a8a8" stroke="#444" stroke-width="1"/>
<path d="M55 98 H58 M55 100 H58 M61 102 H66 M61 104 H66 M61 106 H66" stroke="#555" stroke-width="0.8"/>
<path d="M77 99.5 L79 101.5 L81 99.5" fill="none" stroke="#5a5a5a" stroke-width="1"/>
<path d="M53 123.5 L60 119 L65 125 L61 131 Z" fill="#7a7a7a"/>
<path d="M60 119 L64 116.5 L68 121.5 L65 125 Z" fill="#5e5e5e"/>
<path d="M64.5 118 L67 116 L69.5 119 L67.5 121 Z" fill="#7a7a7a"/>
<rect x="104.5" y="75.5" width="122" height="22" fill="none" stroke="#4a4a4a" stroke-width="1"/>
<line x1="213.5" y1="76" x2="213.5" y2="97" stroke="#4a4a4a"/>
<path d="M217 85 L220 88 L223 85 Z" fill="#4e4e4e"/>
<rect x="229.5" y="75.5" width="42" height="22" fill="none" stroke="#4a4a4a" stroke-width="1"/>
<line x1="258.5" y1="76" x2="258.5" y2="97" stroke="#4a4a4a"/>
<path d="M262 85 L265 88 L268 85 Z" fill="#4e4e4e"/>
<path d="M312.3 79 L314.8 81.5 L317.3 79 Z M288.7 81 L291 78.5 L293.3 81 Z" fill="#555"/>
<path d="M226 116.5 L228.5 119.5 L231 116.5" fill="none" stroke="#5a5a5a"/>
<path d="M179 116.5 L181 118.5 L183 116.5" fill="none" stroke="#4e4e4e"/>
<line x1="193.5" y1="107" x2="193.5" y2="128" stroke="#5a5a5a"/>
<line x1="239.5" y1="107" x2="239.5" y2="128" stroke="#5a5a5a"/>
<rect x="202" y="110" width="14" height="12.5" fill="#8a8a8a"/>
<path d="M209 110 V122.5 M202 116 H216" stroke="#5c5c5c" stroke-width="0.8" stroke-dasharray="1 1"/>
<path d="M249 116 L254.5 110.5 L260 116 L254.5 121.5 Z" fill="#d8d8d8" stroke="#383838" stroke-width="0.8"/>
<path d="M253 108.5 V113" stroke="#aaa" stroke-width="1"/>
<path d="M260.5 116 Q263 119 261.5 121" fill="none" stroke="#8a8a8a" stroke-width="1.5"/>
<rect x="247" y="122.5" width="16" height="3" fill="#8a8a8a"/>
<path d="M272 116.5 L274 118.5 L276 116.5" fill="none" stroke="#4e4e4e"/>
<path d="M310 116.5 L312 118.5 L314 116.5" fill="none" stroke="#4e4e4e"/>
<path d="M87.5 145.5 H94.5 V152.5 M89.5 147.5 L94 152" fill="none" stroke="#555" stroke-width="1"/>
<path d="M316.5 145.5 H323.5 V152.5 M318.5 147.5 L323 152" fill="none" stroke="#555" stroke-width="1"/>
<path d="M599.5 145.5 H606.5 V152.5 M601.5 147.5 L606 152" fill="none" stroke="#555" stroke-width="1"/>
<rect x="340" y="78" width="14" height="1" fill="#5e5e5e"/>
<rect x="340" y="81" width="12" height="1" fill="#5e5e5e"/>
<rect x="340" y="84" width="14" height="1" fill="#5e5e5e"/>
<rect x="364" y="82" width="14" height="1" fill="#5e5e5e"/>
<rect x="364" y="85" width="10" height="1" fill="#5e5e5e"/>
<rect x="364" y="88" width="14" height="1" fill="#5e5e5e"/>
<rect x="388" y="87" width="14" height="1" fill="#5e5e5e"/>
<rect x="388" y="90" width="12" height="1" fill="#5e5e5e"/>
<rect x="388" y="93" width="14" height="1" fill="#5e5e5e"/>
<text x="414" y="88" font-size="10" fill="#5e5e5e" transform="rotate(-45 419 84)" font-family="Liberation Sans">ab</text>
<path d="M418.5 92.5 L428 83 M424.5 83 H428 V86.5" fill="none" stroke="#5e5e5e" stroke-width="1"/>
<path d="M434 85.5 L436 87.5 L438 85.5" fill="none" stroke="#5e5e5e"/>
<rect x="340" y="112" width="14" height="1" fill="#5e5e5e"/>
<rect x="340" y="115" width="10" height="1" fill="#5e5e5e"/>
<rect x="340" y="118" width="14" height="1" fill="#5e5e5e"/>
<rect x="340" y="121" width="10" height="1" fill="#5e5e5e"/>
<rect x="364.0" y="112" width="14" height="1" fill="#5e5e5e"/>
<rect x="388" y="112" width="14" height="1" fill="#5e5e5e"/>
<rect x="366.0" y="115" width="10" height="1" fill="#5e5e5e"/>
<rect x="392" y="115" width="10" height="1" fill="#5e5e5e"/>
<rect x="364.0" y="118" width="14" height="1" fill="#5e5e5e"/>
<rect x="388" y="118" width="14" height="1" fill="#5e5e5e"/>
<rect x="366.0" y="121" width="10" height="1" fill="#5e5e5e"/>
<rect x="392" y="121" width="10" height="1" fill="#5e5e5e"/>
<rect x="412" y="110" width="16" height="1" fill="#5e5e5e"/>
<rect x="412" y="122" width="16" height="1" fill="#5e5e5e"/>
<rect x="420" y="113" width="8" height="1" fill="#5e5e5e"/>
<rect x="420" y="116" width="8" height="1" fill="#5e5e5e"/>
<rect x="420" y="119" width="8" height="1" fill="#5e5e5e"/>
<rect x="436" y="110" width="16" height="1" fill="#5e5e5e"/>
<rect x="436" y="122" width="16" height="1" fill="#5e5e5e"/>
<rect x="444" y="113" width="8" height="1" fill="#5e5e5e"/>
<rect x="444" y="116" width="8" height="1" fill="#5e5e5e"/>
<rect x="444" y="119" width="8" height="1" fill="#5e5e5e"/>
<path d="M412.5 116.5 L416 113.5 V119.5 Z" fill="#5e5e5e"/><rect x="415" y="116" width="4" height="1.2" fill="#5e5e5e"/>
<path d="M443.5 116.5 L440 113.5 V119.5 Z" fill="#5e5e5e"/><rect x="436" y="116" width="5" height="1.2" fill="#5e5e5e"/>
<line x1="459.5" y1="73" x2="459.5" y2="129" stroke="#5a5a5a"/>
<text x="468" y="86" font-size="9" fill="#5e5e5e" font-family="Liberation Sans">ab</text>
<text x="468" y="93" font-size="9" fill="#5e5e5e" font-family="Liberation Sans">c</text>
<path d="M480 88 V90.5 H475.5 M477 89 L475.5 90.5 L477 92" fill="none" stroke="#5e5e5e" stroke-width="0.9"/>
<rect x="467" y="109" width="15" height="15" fill="#9a9a9a"/>
<path d="M467 113.5 H482 M467 119.5 H482 M474.5 109 V113.5 M474.5 119.5 V124" stroke="#444" stroke-width="1"/>
<path d="M470 116.5 H479 M471.5 115 L470 116.5 L471.5 118 M477.5 115 L479 116.5 L477.5 118" fill="none" stroke="#444" stroke-width="0.9"/>
<path d="M491 116.5 L493 118.5 L495 116.5" fill="none" stroke="#5e5e5e"/>
<rect x="518.5" y="67.5" width="84" height="22" fill="none" stroke="#4a4a4a"/>
<line x1="589.5" y1="68" x2="589.5" y2="89" stroke="#4a4a4a"/>
<path d="M593 77 L596 80 L599 77 Z" fill="#4e4e4e"/>
<rect x="521" y="93" width="16" height="8" fill="#8c8c8c"/>
<circle cx="529" cy="97" r="2.2" fill="#555"/>
<ellipse cx="529" cy="103.5" rx="3.5" ry="1.3" fill="#8c8c8c"/><ellipse cx="529" cy="106" rx="3.5" ry="1.3" fill="#8c8c8c"/><ellipse cx="529" cy="108.5" rx="3.5" ry="1.3" fill="#8c8c8c"/><ellipse cx="534" cy="101" rx="3" ry="1.3" fill="#8c8c8c"/><ellipse cx="534" cy="103.5" rx="3" ry="1.3" fill="#8c8c8c"/>
<path d="M544.5 100 L547 102.5 L549.5 100" fill="none" stroke="#fff" stroke-width="1.2"/>
<text x="562" y="107" font-size="14" fill="#4e4e4e" font-family="Liberation Sans">%</text>
<path d="M590.5 99.5 H594 V102.5 Q594 105.5 590.5 106.5 L590.5 105.3 Q592 104.5 592 103 H590.5 Z" fill="#4e4e4e"/>
<text x="528" y="124" font-size="7" fill="#4e4e4e" font-family="Liberation Sans">.0</text>
<text x="524" y="131" font-size="7" fill="#4e4e4e" font-family="Liberation Sans">.00</text>
<path d="M521 120.5 H527 M523 118.5 L521 120.5 L523 122.5" fill="none" stroke="#4e4e4e"/>
<text x="548" y="124" font-size="7" fill="#4e4e4e" font-family="Liberation Sans">.00</text>
<text x="552" y="131" font-size="7" fill="#4e4e4e" font-family="Liberation Sans">.0</text>
<path d="M545 128.5 H551 M549 126.5 L551 128.5 L549 130.5" fill="none" stroke="#4e4e4e"/>
<rect x="622" y="70" width="14" height="14" fill="#6e6e6e"/>
<path d="M622 74.5 H636 M622 79.5 H636 M627.5 70 V84 M631.5 70 V84" stroke="#383838" stroke-width="0.8"/>
<rect x="622" y="93" width="14" height="14" fill="#6e6e6e"/>
<path d="M622 97.5 H636 M622 102.5 H636 M627.5 93 V107 M631.5 93 V107" stroke="#383838" stroke-width="0.8"/>
<rect x="622" y="116" width="14" height="14" fill="#6e6e6e"/>
<path d="M622 120.5 H636 M622 125.5 H636 M627.5 116 V130 M631.5 116 V130" stroke="#383838" stroke-width="0.8"/>
<rect x="628" y="77" width="10" height="9" fill="#9a9a9a" stroke="#383838" stroke-width="0.8"/>
<path d="M630.5 80 H635.5 M630.5 83 H635.5" stroke="#444" stroke-width="0.8"/>
<path d="M637 95 L628 106 L626 110 L630 108 L638 100 Z" fill="#9a9a9a" stroke="#383838" stroke-width="0.8"/>
<path d="M637 118 L628 129 L626 133 L630 131 L638 123 Z" fill="#9a9a9a" stroke="#383838" stroke-width="0.8"/>
<path d="M802 71.5 H810 M802 75.5 H810 M802 79.5 H810 M802 83.5 H810" stroke="#6a6a6a" stroke-width="2.2" stroke-dasharray="3.5 0.8"/>
<path d="M802 94.5 H810 M802 98.5 H810 M802 102.5 H810 M802 106.5 H810" stroke="#6a6a6a" stroke-width="2.2" stroke-dasharray="3.5 0.8"/>
<path d="M802 117.5 H810 M802 121.5 H810 M802 125.5 H810 M802 129.5 H810" stroke="#6a6a6a" stroke-width="2.2" stroke-dasharray="3.5 0.8"/>
<path d="M810 77.5 H818 M806 77.5 L809 75 V80 Z" fill="#6a6a6a" stroke="#6a6a6a" stroke-width="2"/>
<path d="M810 95 L818 103 M818 95 L810 103" stroke="#6a6a6a" stroke-width="1.2"/>
<path d="M802 117.5 H817 M802 117.5 V115.5 M817 117.5 V115.5" stroke="#6a6a6a" stroke-width="0.8"/>
<rect x="810" y="120" width="8" height="11" fill="none" stroke="#6a6a6a" stroke-width="2" stroke-dasharray="3 0.8"/>
<path d="M911 72 V70.5 H896 L904 78 L896 85.5 H911 V84" fill="none" stroke="#4e4e4e" stroke-width="1.6"/>
<path d="M919.5 77 L921.5 79 L923.5 77" fill="none" stroke="#4e4e4e"/>
<text x="935" y="78" font-size="8.5" fill="#5a5a5a" font-family="Liberation Sans">A</text>
<text x="935" y="86" font-size="8.5" fill="#5a5a5a" font-family="Liberation Sans">Z</text>
<path d="M942 77 H950 L947 81 V85 L945 85 V81 Z" fill="#5a5a5a"/>
<path d="M957.5 77 L959.5 79 L961.5 77" fill="none" stroke="#4e4e4e"/>
<rect x="897" y="93" width="14" height="16" fill="#999"/>
<rect x="897" y="93" width="14" height="3" fill="#6c6c6c"/>
<path d="M904 98 V105 M900.5 102 L904 105.5 L907.5 102" fill="none" stroke="#333" stroke-width="1.6"/>
<path d="M919.5 100 L921.5 102 L923.5 100" fill="none" stroke="#4e4e4e"/>
<circle cx="944" cy="99.5" r="3.6" fill="#fff" stroke="#3b8ad8" stroke-width="2"/>
<path d="M941.5 102 L936 107.5" stroke="#3b8ad8" stroke-width="2.4"/>
<path d="M957 100 L959 102 L961 100" fill="none" stroke="#fff" stroke-width="1.2"/>
<path d="M897 126 L905 117 L910 121.5 L902 130.5 Z" fill="#5e5e5e"/>
<path d="M919.5 123 L921.5 125 L923.5 123" fill="none" stroke="#4e4e4e"/>
<path d="M770.5 77 L772.5 79 L774.5 77" fill="none" stroke="#4e4e4e"/>
<path d="M727 100 L729 102 L731 100" fill="none" stroke="#4e4e4e"/>
<path d="M698.5 123 L700.5 125 L702.5 123" fill="none" stroke="#4e4e4e"/>
<path d="M862 77 L864 79 L866 77" fill="none" stroke="#4e4e4e"/>
<path d="M866 100 L868 102 L870 100" fill="none" stroke="#4e4e4e"/>
<path d="M854 123 L856 125 L858 123" fill="none" stroke="#4e4e4e"/>
<path d="M1002 151 L1008 145.5 L1014 151" fill="none" stroke="#d0d0d0" stroke-width="1.1"/>
<path d="M92.5 177 L100.5 177 L96.5 181 Z" fill="#fff"/>
<rect x="121" y="174" width="2" height="2" fill="#fff"/><rect x="121" y="178.5" width="2" height="2" fill="#fff"/><rect x="121" y="183" width="2" height="2" fill="#fff"/>
<path d="M150.8 175.5 L161 185.5 M161 175.5 L150.8 185.5" stroke="#5c5c5c" stroke-width="1.5"/>
<path d="M185.5 179.5 L190 184 L199 175" fill="none" stroke="#5c5c5c" stroke-width="2.2"/>
<text x="221" y="185" font-size="13" fill="#fff" font-style="italic" font-weight="bold" font-family="Liberation Serif">f</text>
<text x="226.5" y="185" font-size="10" fill="#fff" font-style="italic" font-weight="bold" font-family="Liberation Serif">x</text>
<path d="M1006 177.5 L1010.5 182 L1015 177.5" fill="none" stroke="#fff" stroke-width="1.6"/>
<path d="M10 219 L22 219 L22 207 Z" fill="#6a6a6a"/>
<path d="M1009.5 215.5 L1013.5 210.5 L1017.5 215.5 Z" fill="#fff"/>
<path d="M1009.5 669 L1013.5 674 L1017.5 669 Z" fill="#fff"/>
<path d="M902 688.5 L897.5 692.5 L902 696.5 Z" fill="#fff"/>
<path d="M993 688.5 L997.5 692.5 L993 696.5 Z" fill="#fff"/>
<path d="M33 687.5 L29 691.5 L33 695.5 Z" fill="#a0a0a0"/>
<path d="M56 687.5 L60 691.5 L56 695.5 Z" fill="#a0a0a0"/>
<rect x="875" y="687" width="2" height="2" fill="#fff"/>
<rect x="875" y="691" width="2" height="2" fill="#fff"/>
<rect x="875" y="695" width="2" height="2" fill="#fff"/>
<circle cx="518" cy="692.5" r="7.2" fill="none" stroke="#c8c8c8" stroke-width="1.2"/>
<path d="M518 688.5 V696.5 M514 692.5 H522" stroke="#c8c8c8" stroke-width="1.6"/>
<rect x="736.5" y="710.5" width="13" height="13" fill="none" stroke="#fff"/>
<path d="M740.5 710.5 V723.5 M745.5 710.5 V723.5 M736.5 714.5 H749.5 M736.5 719.5 H749.5" stroke="#fff"/>
<rect x="776.5" y="710.5" width="14" height="13" fill="none" stroke="#fff"/>
<rect x="779.5" y="712.5" width="8" height="9" fill="none" stroke="#fff"/>
<path d="M781 715.5 H786 M781 717.5 H786 M781 719.5 H786" stroke="#fff"/>
<rect x="816.5" y="710.5" width="14" height="13" fill="none" stroke="#fff"/>
<rect x="817" y="711" width="5" height="6" fill="#fff"/><rect x="823" y="711" width="3" height="6" fill="#fff"/>
<rect x="850" y="716" width="8" height="1.2" fill="#fff"/>
<rect x="862" y="716" width="101" height="1.2" fill="#fff"/>
<rect x="911" y="711.5" width="5" height="11.5" fill="#fff"/>
<path d="M967 716.5 H976 M971.5 712 V721" stroke="#fff" stroke-width="1.2"/>
<path d="M16 741.5 L23 740.5 V747.3 H16 Z M24 740.3 L32.5 739 V747.3 H24 Z M16 748.3 H23 V755.3 L16 754.3 Z M24 748.3 H32.5 V756.5 L24 755.4 Z" fill="#fff"/>
<circle cx="74.5" cy="745" r="5.6" fill="none" stroke="#fff" stroke-width="1.4"/>
<path d="M70.5 749 L64 755.5" stroke="#fff" stroke-width="1.6"/>
<rect x="112.5" y="743.5" width="11" height="9" fill="none" stroke="#fff" stroke-width="1.2"/>
<path d="M111 741 H125 M111 755 H125 M127.5 741 V755" stroke="#fff" stroke-width="1.2"/>
<path d="M171 748 L161.04 742.25 A11.5 11.5 0 0 1 180.96 742.25 Z" fill="#db4437"/>
<path d="M171 748 L180.96 742.25 A11.5 11.5 0 0 1 171 759.5 Z" fill="#f4c20d"/>
<path d="M171 748 L171 759.5 A11.5 11.5 0 0 1 161.04 742.25 Z" fill="#0f9d58"/>
<circle cx="171" cy="748" r="5.6" fill="#fff"/><circle cx="171" cy="748" r="4.4" fill="#3b78e7"/>
<path d="M208 740 H216 L218 742 H231 V757 H208 Z" fill="#e8b540"/>
<rect x="208" y="744" width="23" height="13" fill="#ffd35c"/>
<rect x="214" y="749" width="11" height="8" fill="#3a8fd8"/><rect x="217" y="752" width="5" height="5" fill="#ffd35c"/>
<rect x="262" y="738" width="20" height="20" rx="1" fill="#1f7244"/>
<rect x="270" y="738" width="12" height="7" fill="#33c481"/><rect x="270" y="745" width="12" height="6.5" fill="#21a366"/><rect x="262" y="751.5" width="20" height="6.5" fill="#185c37"/>
<rect x="256" y="741" width="14" height="14" rx="1" fill="#107c41"/>
<path d="M259.5 744 L266.5 752.5 M266.5 744 L259.5 752.5" stroke="#fff" stroke-width="1.8"/>
<ellipse cx="315" cy="749" rx="10" ry="8.5" fill="#c6dbe8" transform="rotate(-20 315 749)"/>
<circle cx="310" cy="745" r="2" fill="#e04040"/><circle cx="315" cy="743" r="2" fill="#3a7ad8"/><circle cx="309" cy="751" r="2" fill="#40a040"/><circle cx="313" cy="755" r="1.8" fill="#e0c040"/>
<path d="M329.5 738 L320 753" stroke="#d89040" stroke-width="2.4"/>
<path d="M320 753 L317.5 757" stroke="#8a5020" stroke-width="2.4"/>
<path d="M859.5 750.8 L865 745 L870.5 750.8" fill="none" stroke="#fff" stroke-width="1.3"/>
<rect x="886.5" y="744.5" width="10" height="7" fill="none" stroke="#fff"/><rect x="888" y="746" width="8" height="4" fill="#fff"/><rect x="897" y="746" width="1.5" height="4" fill="#fff"/>
<path d="M882.5 742 V744.5 M884.5 742 V744.5 M881.5 744.5 H885.5 V746 Q885.5 748 883.5 748 Q881.5 748 881.5 746 Z M883.5 748 V753" fill="none" stroke="#fff" stroke-width="1"/>
<path d="M908.5 754 A11 11 0 0 1 919.5 743 M911.5 754 A8 8 0 0 1 919.5 746 M914.5 754 A5 5 0 0 1 919.5 749" fill="none" stroke="#fff" stroke-width="1.1"/>
<circle cx="918.5" cy="753" r="1.3" fill="#fff"/>
<path d="M929.5 745.5 H932 L936 742 V755 L932 751.5 H929.5 Z" fill="none" stroke="#fff" stroke-width="1.1"/>
<path d="M938.5 746 Q940.5 748.5 938.5 751 M940.5 744 Q944 748.5 940.5 753 M942.5 742 Q947 748.5 942.5 755" fill="none" stroke="#fff" stroke-width="1.1"/>
<path d="M46 228.5 H88 L93.5 237.5 H40.5 Z" fill="#fff" stroke="#9a9a9a" stroke-width="1.3"/>
<text x="67" y="235.6" font-size="4.6" font-weight="bold" fill="#505050" text-anchor="middle" font-family="Liberation Sans" textLength="36" lengthAdjust="spacingAndGlyphs">OGAN KOMERING ULU SELATAN</text>
<path d="M40.5 237.5 H93.5 V272 Q93.5 287 67 296.5 Q40.5 287 40.5 272 Z" fill="#d0ccc8" stroke="#8c8c8c" stroke-width="1"/>
<path d="M42.5 239.5 H91.5 V272 Q91.5 285.5 67 294 Q42.5 285.5 42.5 272 Z" fill="#0b7ac8"/>
<path d="M52.5 252 Q54 246 59 245 Q62 241.5 67 242 Q72 241.5 75 245 Q80 246 81.5 252 Q82 257 79 261 Q80 266 75 268.5 Q71 271 67 268.5 Q63 271 59 268.5 Q54 266 55 261 Q52 257 52.5 252 Z" fill="#f2ec12"/>
<path d="M54 252.5 L58 248 L62 246.5 L67 244 L72 246.5 L76 248 L80 252.5 Z" fill="#2e9a44"/>
<path d="M54 252.5 H80 V254.2 H54 Z" fill="#1c7ab8"/>
<path d="M56 262 Q61 266 67 266.5 Q73 266 78 262" fill="none" stroke="#3a8a9a" stroke-width="0.8"/>
<circle cx="67" cy="259" r="4.3" fill="#fff" stroke="#666" stroke-width="0.6"/>
<path d="M64 260.5 Q67 256 70.5 257.5 Q68 258.5 67.5 261 Z" fill="#222"/>
<path d="M46.5 246 Q46.5 264 58 276" fill="none" stroke="#e6de1a" stroke-width="3.2"/>
<path d="M46.5 246 Q46.5 264 58 276" fill="none" stroke="#7a8030" stroke-width="0.6" stroke-dasharray="1.2 1.4"/>
<path d="M87.5 246 Q87.5 264 76 276" fill="none" stroke="#f0f0f4" stroke-width="3"/>
<path d="M87.5 246 Q87.5 264 76 276" fill="none" stroke="#b03c3c" stroke-width="0.8" stroke-dasharray="1 2.2"/>
<path d="M56.5 274.5 L61 278.5 M77.5 274.5 L73 278.5" stroke="#111" stroke-width="1.5"/>
<rect x="62" y="274.5" width="10" height="4.5" fill="#d8d8e0" stroke="#777" stroke-width="0.5"/>
<path d="M49.5 278 L55 280 H79 L84.5 278 L82 284.5 L77 287 H57 L52 284.5 Z" fill="#f6eef4" stroke="#c88aa0" stroke-width="0.8"/>
<rect x="58.5" y="282.5" width="17" height="1.3" fill="#666"/>
</svg>
</body></html>
